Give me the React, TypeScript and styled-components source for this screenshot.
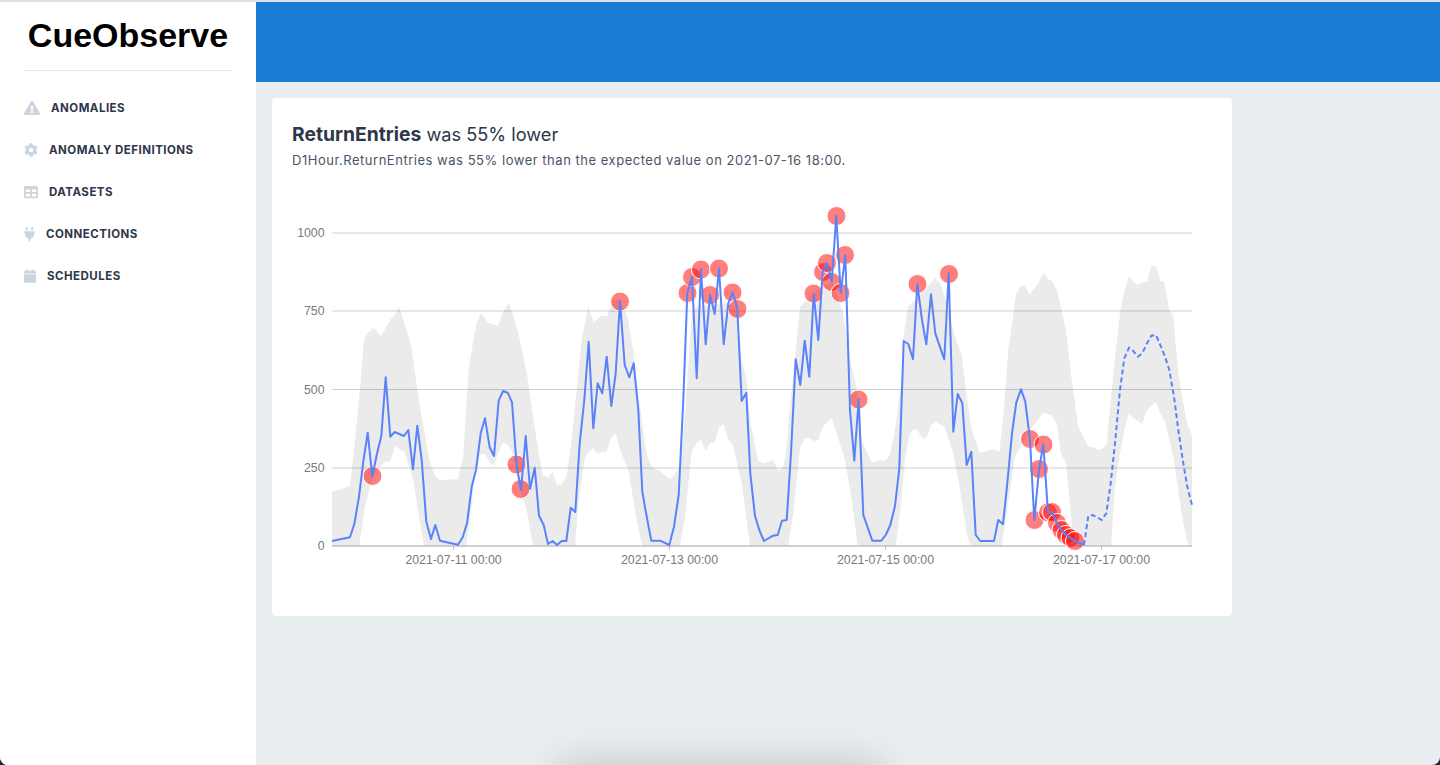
import React from 'react';
import styled, { createGlobalStyle } from 'styled-components';
import { FaExclamationTriangle, FaCog, FaTable, FaPlug, FaCalendar } from 'react-icons/fa';

const GlobalStyle = createGlobalStyle`
  html, body {
    margin: 0;
    height: 100%;
    background: #3a1a40;
    overflow: hidden;
  }
  * {
    box-sizing: border-box;
  }
`;

const Shell = styled.div`
  position: relative;
  display: flex;
  height: 765px;
  overflow: hidden;
  border-top: 2px solid #e2e2e2;
  border-radius: 0 0 8px 8px;
  background: #e9eef1;
  font-family: Inter, 'Liberation Sans', sans-serif;
`;

const Sidebar = styled.aside`
  flex: 0 0 256px;
  background: #ffffff;
  padding: 0 24px;
`;

const Logo = styled.div`
  height: 69px;
  padding-top: 15px;
  border-bottom: 1px solid #e2e8f0;
  font-family: 'Liberation Sans', Arial, sans-serif;
  font-size: 34px;
  font-weight: 700;
  line-height: 36px;
  color: #000000;
  text-align: center;
  white-space: nowrap;
`;

const NavList = styled.nav`
  display: flex;
  flex-direction: column;
  gap: 26px;
  padding-top: 29px;
`;

const NavRow = styled.a`
  display: flex;
  align-items: center;
  gap: 11px;
  height: 16px;
  font-size: 11.5px;
  font-weight: 700;
  letter-spacing: 0.48px;
  color: #2d3748;
  text-transform: uppercase;
`;

const NavIcon = styled.span<{ $w: number }>`
  display: flex;
  width: ${(p) => p.$w}px;
  height: 16px;
  color: #cbd5e0;

  svg {
    width: 100%;
    height: 100%;
  }
`;

const Main = styled.main`
  flex: 1;
  display: flex;
  flex-direction: column;
`;

const Banner = styled.header`
  flex: 0 0 80px;
  background: #1a7bd4;
`;

const Content = styled.div`
  padding: 16px;
`;

const Card = styled.section`
  width: 960px;
  height: 518px;
  padding: 24px 20px 0;
  border-radius: 4px;
  background: #ffffff;
`;

const Title = styled.h1`
  margin: 0;
  font-size: 18.2px;
  font-weight: 400;
  line-height: 24px;
  color: #2d3748;

  strong {
    font-size: 19.3px;
    font-weight: 700;
  }
`;

const Subtitle = styled.p`
  margin: 5px 0 0;
  font-size: 13px;
  line-height: 18px;
  letter-spacing: 0.52px;
  color: #4a5568;
`;

const ChartBox = styled.div`
  margin-top: 21px;
  width: 920px;
  height: 390px;

  svg {
    display: block;
  }
  text {
    font-family: 'Liberation Sans', Arial, sans-serif;
    font-size: 12.3px;
    fill: #7a7a7a;
  }
`;

const DockShadow = styled.div`
  position: absolute;
  left: 565px;
  bottom: -30px;
  width: 310px;
  height: 30px;
  box-shadow: 0 0 36px 6px rgba(0, 20, 10, 0.15);
`;

type Pt = [number, number];

const solid: Pt[] = [
  [332, 541], [350, 537.3], [354.3, 524], [359, 496.7], [363.3, 461.7], [367.7, 432.7], [372.3, 476.7],
  [376.7, 455], [381.3, 436], [385.7, 377.3], [390.3, 436.7], [394.7, 432], [399.3, 434], [404, 436],
  [408.3, 430], [413, 469.3], [417.3, 425.7], [421.7, 460], [426.3, 521.7], [431, 539], [435.3, 525],
  [440, 540.7], [458, 544.7], [462.7, 537.3], [467, 523.3], [471.7, 486.7], [476, 470], [480.7, 433.3],
  [485, 418.3], [489.7, 447.3], [494, 456], [498.7, 400.7], [503, 391], [507.7, 392.7], [512, 402.3],
  [516.7, 466.7], [521, 490], [525.7, 436], [530, 489], [534.7, 467.7], [539, 515.7], [543.7, 525],
  [548, 544], [552.7, 541], [557, 545], [561.7, 541], [566.3, 541], [570.7, 507.7], [575.3, 512],
  [579.7, 443.3], [584.3, 400], [588.7, 341.7], [593.3, 428.3], [597.7, 383.3], [602.3, 393.3],
  [606.7, 356.7], [611.3, 406], [615.7, 373.3], [620, 301], [624.7, 365], [629.3, 377.3], [633.7, 363.3],
  [638.3, 410], [642.3, 491.7], [646.7, 516.7], [651.3, 540.7], [660.3, 540.7], [669.3, 545], [674, 526.7],
  [678.7, 495], [683.3, 400], [687.3, 293.3], [692, 276.7], [696.7, 378.3], [701, 269], [705.7, 344.3],
  [710, 295], [714.7, 314], [719, 268.3], [723.7, 344.3], [728.3, 303.3], [732.7, 292.3], [737.3, 308.3],
  [741.7, 401], [746.3, 392.7], [750.3, 473.3], [755, 516], [759.3, 530], [764, 541], [773, 535.7],
  [777.7, 535], [782, 520.7], [786.7, 520], [791, 453], [795.7, 359.3], [800.3, 385], [804.7, 340.7],
  [809.3, 376.7], [813.7, 294], [818.3, 340], [822.7, 271.7], [827, 263.3], [831.7, 281.7], [836.3, 215.7],
  [840.7, 293.3], [845.3, 255], [850, 410], [854.3, 460.7], [858.7, 399.3], [863.3, 515], [872.3, 540.7],
  [881.3, 540.7], [885.7, 535], [890.3, 525], [895, 506], [899.3, 468.3], [903.7, 341], [908.3, 344],
  [913, 359.3], [917.3, 284], [922, 320], [926.3, 344.3], [931, 294.3], [935.3, 333.3], [944.3, 359.3],
  [948.7, 273.3], [953.3, 431.7], [957.7, 394], [962.3, 403.3], [966.7, 465], [971.3, 451.7], [975.7, 535],
  [980.3, 541], [994, 541], [998.3, 520], [1003, 524.3], [1007.3, 483.3], [1012, 433.3], [1016.3, 402.3],
  [1021, 389.3], [1025.3, 401.7], [1030, 440], [1034.3, 520], [1039, 470], [1043.3, 444], [1048, 512.7],
  [1052.3, 512], [1057, 523.3], [1061.5, 530], [1066, 535], [1075, 541], [1084, 545],
];

const forecast: Pt[] = [
  [1084, 545], [1088.3, 516], [1092.7, 515], [1101.7, 520], [1106.3, 513.3], [1110.7, 483.3], [1115.3, 440],
  [1120, 390], [1124.3, 358.3], [1129, 347.7], [1133.3, 351], [1138, 356.7], [1142.3, 353.3], [1147, 343.3],
  [1151.3, 335.7], [1156, 335], [1160.3, 345], [1165, 356.7], [1169.3, 370], [1174, 396.7], [1178.3, 430],
  [1183, 461.7], [1187.3, 486.7], [1192, 505],
];

const bandTop: Pt[] = [
  [332, 492], [350, 486], [354, 450], [359, 400], [364, 340], [367, 333], [374, 328], [381, 336], [390, 320],
  [394, 316], [399, 307], [406, 328], [411, 345], [415, 373], [420, 407], [430, 463], [435.7, 476.7], [440, 480],
  [458, 479], [463.3, 456.7], [468.3, 373], [473.3, 340], [477, 322], [481, 313], [488, 323], [498, 326],
  [503, 312], [509, 302], [514, 318], [520, 340], [526.7, 373], [536.7, 440], [542.7, 475], [548.3, 477.7],
  [552.3, 471.7], [557.3, 485], [561.7, 484.3], [566.7, 476], [571.7, 440], [576.7, 390], [581.7, 340],
  [588, 306], [594, 322], [601, 316], [607, 316], [614, 298], [620, 300], [628, 318], [633, 350], [640, 407],
  [646.7, 455], [651.7, 467], [660, 470.7], [665, 475], [670, 479], [674, 475], [680, 467], [685, 413],
  [688, 370], [692, 310], [700, 306], [712, 305], [727, 303], [737, 307], [741.7, 360], [746.7, 380],
  [750, 420], [758.3, 461.7], [763.3, 463.3], [773.3, 460], [778.3, 470.7], [783.3, 466.7], [786.7, 446.7],
  [789.3, 413], [795, 357], [800, 306.7], [805, 301.7], [815, 292], [824, 285], [833, 283], [843, 313],
  [850, 360], [856.7, 386.7], [861.7, 440], [871.7, 462.7], [880, 460], [885, 460.7], [890, 455], [895, 430],
  [901.7, 380], [903, 340], [908, 306.7], [921.7, 293], [935, 278], [941, 285], [946.7, 303], [953, 330],
  [961.7, 355], [966.7, 396.7], [971.7, 430], [980, 453], [993.3, 449], [999.3, 451.7], [1003.3, 416.7],
  [1008.3, 350], [1016, 295], [1020, 286.7], [1025, 285], [1029.3, 295], [1038.3, 283.3], [1043.3, 273.3],
  [1048.3, 279.3], [1052.7, 281.7], [1057.3, 291.7], [1066, 330], [1071.7, 380], [1078.3, 426.7], [1088.3, 446.7],
  [1093.3, 447.3], [1098.3, 450], [1103.3, 448.3], [1106.7, 443.3], [1113.3, 373.3], [1120, 313.3], [1124.3, 291.7],
  [1129, 276], [1133.3, 281.7], [1138, 285], [1142.3, 282.3], [1147, 281.7], [1151.3, 266], [1156, 266],
  [1160.3, 280.7], [1164, 281.7], [1169.3, 310], [1173.3, 316.7], [1178.3, 373.3], [1182.7, 400], [1187.3, 425],
  [1192, 435],
];

const bandBottom: Pt[] = [
  [332, 546], [359, 546], [360, 540], [365, 506.7], [370, 486.7], [376.7, 470], [385, 461.7], [390.7, 461],
  [395, 445], [400, 450], [404, 451], [408, 463.3], [413.3, 480], [417.3, 506.7], [421.7, 533], [424, 546],
  [466, 546], [471.7, 506.7], [475, 473], [480, 455], [485, 454], [490, 463], [494, 466], [498, 453], [503, 442.7],
  [507.7, 445], [512, 451.7], [516.7, 471.7], [521, 493], [526.7, 510], [533, 546], [575, 546], [578, 506.7],
  [584.3, 460], [588.7, 451.7], [593.3, 447.7], [597.7, 454], [602.3, 451.7], [606.7, 451.7], [611.3, 437.3],
  [615.7, 433.3], [620, 450], [628.3, 470], [636.7, 520], [642.3, 546], [680, 546], [685, 516.7], [691.7, 451.7],
  [696.7, 443], [701, 440], [706, 451], [710, 443.3], [715, 442.3], [719.3, 426.7], [723.7, 424.3], [728.3, 439.3],
  [732.7, 445], [741.7, 483.3], [750, 546], [788.3, 546], [793.3, 513], [800, 448], [804.7, 438.3], [809, 437.7],
  [813.7, 441], [818.3, 440], [822.7, 426.7], [831.7, 418.3], [838.3, 438.3], [845, 460], [851.7, 500], [857.7, 546],
  [895.7, 546], [900, 513], [905, 460], [909.3, 435], [913.3, 429.3], [916.7, 429.3], [921.7, 437.3], [926, 439],
  [931, 425], [935.3, 421.7], [944.3, 426.7], [953.3, 453], [960, 490], [966.7, 533], [970.7, 546], [1001.7, 546],
  [1006.7, 513], [1015, 456.7], [1030, 430], [1036.7, 421.7], [1043.3, 412.7], [1051.7, 415.7], [1056.7, 423.3],
  [1060.7, 453], [1066, 463], [1071.7, 523], [1073.3, 546], [1111, 546], [1115, 486.7], [1120, 453], [1124.3, 430],
  [1129, 412.7], [1133.3, 418.3], [1142.3, 424], [1147, 410], [1155.7, 401.7], [1160.3, 413.3], [1165, 421.7],
  [1173.3, 456.7], [1182.7, 520], [1187.3, 541.7], [1190.7, 546], [1192, 546],
];

const anomalies: Pt[] = [
  [372.5, 476], [516.5, 464.5], [520.5, 489], [620, 301.5], [687.5, 293], [692, 277], [701, 269.5], [710, 295],
  [719, 268.5], [732.5, 292.5], [737.5, 309], [813.5, 293.5], [823, 272], [827, 263], [831.5, 282], [836.5, 216],
  [840.5, 293], [845, 255], [858.5, 399.5], [917.5, 284], [949, 274], [1030, 439], [1043.5, 444.5], [1039, 469],
  [1034.5, 520], [1048, 512.5], [1052, 512], [1057, 523], [1061.5, 530], [1066, 535], [1070.5, 538], [1075, 541],
];

const gridLines = [
  { label: '1000', y: 233 },
  { label: '750', y: 311 },
  { label: '500', y: 389.5 },
  { label: '250', y: 468 },
];

const dateTicks = [
  { label: '2021-07-11 00:00', x: 453.5 },
  { label: '2021-07-13 00:00', x: 669.5 },
  { label: '2021-07-15 00:00', x: 885.5 },
  { label: '2021-07-17 00:00', x: 1101.5 },
];

const toPath = (pts: Pt[]) => pts.map(([x, y], i) => `${i ? 'L' : 'M'}${x} ${y}`).join(' ');

const bandPath = `${toPath(bandTop)} ${toPath([...bandBottom].reverse()).replace('M', 'L')} Z`;

const Chart = () => (
  <ChartBox>
    {/* viewBox uses page coordinates, simpler to read the data against the screenshot */}
    <svg width="920" height="390" viewBox="292 190 920 390">
      {gridLines.map((g) => (
        <g key={g.label}>
          <line x1="332" x2="1192" y1={g.y} y2={g.y} stroke="#cfcfcf" strokeWidth="1" />
          <text x="324.5" y={g.y + 4} textAnchor="end">{g.label}</text>
        </g>
      ))}
      <text x="324.5" y="550" textAnchor="end">0</text>
      <path d={bandPath} fill="#000000" fillOpacity="0.08" />
      <line x1="332" x2="1192" y1="546" y2="546" stroke="#bfbfbf" strokeWidth="1.5" />
      {dateTicks.map((t) => (
        <g key={t.label}>
          <line x1={t.x} x2={t.x} y1="546" y2="550" stroke="#bfbfbf" />
          <text x={t.x} y="564" textAnchor="middle">{t.label}</text>
        </g>
      ))}
      {anomalies.map(([x, y]) => (
        <circle key={`${x}-${y}`} cx={x} cy={y} r="9.5" fill="#ff0000" fillOpacity="0.5" stroke="#ffffff" strokeWidth="1" />
      ))}
      <path d={toPath(solid)} fill="none" stroke="#5a82fa" strokeWidth="2" strokeLinejoin="round" />
      <path d={toPath(forecast)} fill="none" stroke="#5a82fa" strokeWidth="2" strokeDasharray="5 3" />
    </svg>
  </ChartBox>
);

const navItems = [
  { label: 'Anomalies', icon: <FaExclamationTriangle />, w: 16 },
  { label: 'Anomaly Definitions', icon: <FaCog />, w: 14 },
  { label: 'Datasets', icon: <FaTable />, w: 14 },
  { label: 'Connections', icon: <FaPlug />, w: 11 },
  { label: 'Schedules', icon: <FaCalendar />, w: 12 },
];

const App = () => (
  <>
    <GlobalStyle />
    <Shell>
      <Sidebar>
        <Logo>CueObserve</Logo>
        <NavList>
          {navItems.map((item) => (
            <NavRow key={item.label}>
              <NavIcon $w={item.w}>{item.icon}</NavIcon>
              {item.label}
            </NavRow>
          ))}
        </NavList>
      </Sidebar>
      <Main>
        <Banner />
        <Content>
          <Card>
            <Title>
              <strong>ReturnEntries</strong> was 55% lower
            </Title>
            <Subtitle>D1Hour.ReturnEntries was 55% lower than the expected value on 2021-07-16 18:00.</Subtitle>
            <Chart />
          </Card>
        </Content>
      </Main>
      <DockShadow />
    </Shell>
  </>
);

export default App;
